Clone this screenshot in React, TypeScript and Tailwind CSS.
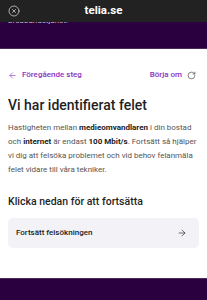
import React from 'react';
import { ArrowLeft, ArrowRight, RotateCw, CircleX } from 'lucide-react';

const App = () => {
  return (
    <div className="w-[207px] h-[300px] overflow-hidden bg-white flex flex-col" style={{ fontFamily: 'Roboto, "Noto Sans", sans-serif' }}>
      <div className="h-[22px] shrink-0 bg-[#222222] flex items-center px-[8px] relative">
        <CircleX size={12} strokeWidth={1.5} className="text-[#d8d8d8]" />
        <span className="absolute left-0 right-0 text-center text-white text-[11.5px] font-bold leading-none">telia.se</span>
      </div>

      <div className="h-[27px] shrink-0 bg-[#2a003f] border-b border-[#4a2a5c] overflow-hidden">
        <p className="text-[#cdbfd6] text-[8px] leading-none px-[8px] -mt-[5px]">bredbandstjänst.</p>
      </div>

      <div className="flex-1 px-[8px] pt-[21px]">
        <div className="flex justify-between items-center text-[#8b2fc0] text-[8px] font-medium h-[10px]">
          <div className="flex items-center gap-[5px]">
            <ArrowLeft size={9} strokeWidth={1.6} />
            <span>Föregående steg</span>
          </div>
          <div className="flex items-center gap-[5px] pr-[3px]">
            <span>Börja om</span>
            <RotateCw size={9} strokeWidth={1.6} className="text-[#333]" />
          </div>
        </div>

        <h1 className="mt-[16px] text-[14px] font-medium text-[#1f1f1f] leading-[18px]">Vi har identifierat felet</h1>

        <p className="mt-[7px] text-[8px] leading-[14px] text-[#555]">
          Hastigheten mellan <b className="font-bold text-[#222]">medieomvandlaren</b> i din bostad och <b className="font-bold text-[#222]">internet</b> är endast <b className="font-bold text-[#222]">100 Mbit/s</b>. Fortsätt så hjälper vi dig att felsöka problemet och vid behov felanmäla felet vidare till våra tekniker.
        </p>

        <h2 className="mt-[18px] text-[10.5px] font-medium text-[#1f1f1f] leading-[14px]">Klicka nedan för att fortsätta</h2>

        <button className="mt-[9px] w-full h-[30px] bg-[#f2f2f7] rounded-[5px] flex items-center justify-between pl-[8px] pr-[12px] text-[8px] font-medium text-[#222]">
          <span>Fortsätt felsökningen</span>
          <ArrowRight size={10} strokeWidth={1.5} />
        </button>
      </div>

      <div className="h-[22px] shrink-0 bg-[#2a003f] border-t border-[#4a2a5c]" />
    </div>
  );
};

export default App;
